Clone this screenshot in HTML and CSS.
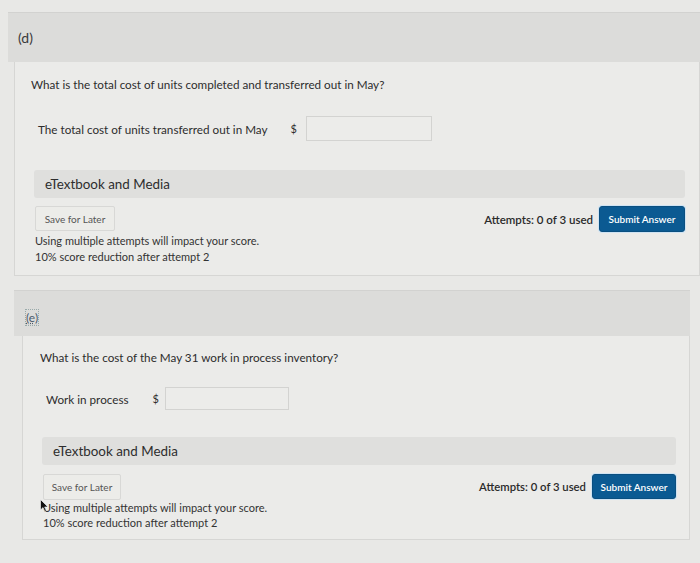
FILE: index.html
```html
<!DOCTYPE html>
<html>
<head>
<meta charset="utf-8">
<link rel="stylesheet" href="styles.css">
</head>
<body>
<div class="page">
  <section class="part part-d">
    <div class="part-head"><span class="label">(d)</span></div>
    <div class="part-body">
      <p class="question">What is the total cost of units completed and transferred out in May?</p>
      <div class="answer-row">
        <span class="answer-label">The total cost of units transferred out in May</span>
        <span class="dollar">$</span>
        <span class="input"></span>
      </div>
      <div class="media-bar">eTextbook and Media</div>
      <div class="actions">
        <div class="left">
          <button class="save">Save for Later</button>
          <div class="note">Using multiple attempts will impact your score.<br>10% score reduction after attempt 2</div>
        </div>
        <div class="right">
          <span class="attempts">Attempts: 0 of 3 used</span>
          <button class="submit">Submit Answer</button>
        </div>
      </div>
    </div>
  </section>

  <section class="part part-e">
    <div class="part-head"><span class="label label-focus">(e)</span></div>
    <div class="part-body">
      <p class="question">What is the cost of the May 31 work in process inventory?</p>
      <div class="answer-row">
        <span class="answer-label">Work in process</span>
        <span class="dollar">$</span>
        <span class="input"></span>
      </div>
      <div class="media-bar">eTextbook and Media</div>
      <div class="actions">
        <div class="left">
          <button class="save">Save for Later</button>
          <div class="note note-cursor">Using multiple attempts will impact your score.<br>10% score reduction after attempt 2<svg class="cursor" width="9" height="13" viewBox="0 0 9 13"><path d="M0.5 0.5 L0.5 11 L3 8.6 L4.8 12.5 L6.4 11.8 L4.6 8 L8 8 Z" fill="#111" stroke="#fff" stroke-width="0.6"/></svg></div>
        </div>
        <div class="right">
          <span class="attempts">Attempts: 0 of 3 used</span>
          <button class="submit">Submit Answer</button>
        </div>
      </div>
    </div>
  </section>
</div>
</body>
</html>
```

FILE: styles.css
```css
* { box-sizing: border-box; }
html, body { margin: 0; padding: 0; }
body {
  background: #e8e8e6;
  font-family: Lato, "Open Sans", Arial, sans-serif;
  color: #2d2d2d;
  width: 700px;
  height: 563px;
  overflow: hidden;
}
.page {
  padding-top: 12px;
  display: flex;
  flex-direction: column;
  gap: 14px;
}
.part {
  display: flex;
  flex-direction: column;
}
.part-d { margin-left: 8px; }
.part-e { margin-left: 14px; margin-right: 10px; }

.part-head {
  background: #dcdcda;
  height: 50px;
  display: flex;
  align-items: center;
  padding-left: 10px;
  border-top: 1px solid #d2d2d0;
}
.part-e .part-head { height: 46px; padding-left: 12px; padding-top: 8px; }
.label {
  font-size: 14px;
  color: #3a3a3a;
}
.label-focus {
  font-size: 12px;
  color: #4a5a6a;
  text-decoration: underline dotted;
  outline: 1px dotted #9aa;
  outline-offset: 0;
}
.part-body {
  background: #ebebe9;
  border: 1px solid #d6d6d4;
  border-top: none;
  margin-left: 6px;
  padding: 14px 14px 10px 16px;
}
.part-e .part-body {
  margin-left: 8px;
  padding: 13px 13px 9px 17px;
}
.question {
  margin: 0;
  font-size: 11.7px;
  line-height: 16px;
}
.answer-row {
  display: flex;
  align-items: center;
  margin-top: 24px;
  padding-left: 7px;
  font-size: 11.7px;
}
.part-e .answer-row { margin-top: 22px; padding-left: 6px; }
.answer-label { margin-right: 23px; }
.part-e .answer-label { margin-right: 24px; }
.dollar { font-size: 11px; margin-right: 9px; }
.part-e .dollar { margin-right: 6px; }
.input {
  display: block;
  width: 126px;
  height: 25px;
  border: 1px solid #d3d3d1;
  background: #ececea;
}
.part-e .input { width: 124px; height: 23px; }
.media-bar {
  margin-top: 29px;
  margin-left: 3px;
  background: #dfdfdd;
  height: 28px;
  display: flex;
  align-items: center;
  padding-left: 11px;
  font-size: 13.4px;
  border-radius: 3px;
}
.part-e .media-bar { margin-top: 27px; margin-left: 2px; }
.actions {
  display: flex;
  justify-content: space-between;
  align-items: flex-start;
  margin-top: 8px;
  margin-left: 4px;
}
.part-e .actions { margin-left: 3px; margin-top: 9px; }
.left { display: flex; flex-direction: column; align-items: flex-start; }
.save {
  font-family: inherit;
  font-size: 10px;
  color: #555;
  background: #ecece9;
  border: 1px solid #d8d8d6;
  border-radius: 2px;
  height: 25px;
  width: 80px;
  padding: 0;
}
.part-e .save { width: 78px; height: 26px; }
.note {
  margin-top: 2px;
  font-size: 11px;
  line-height: 16px;
  color: #333;
}
.part-e .note { margin-top: 0; line-height: 15px; }
.note-cursor { position: relative; }
.cursor {
  position: absolute;
  left: -3px;
  top: -1px;
}
.right {
  display: flex;
  align-items: center;
  gap: 6px;
}
.attempts {
  font-size: 11.5px;
  font-weight: 600;
  color: #2a2a2a;
}
.part-e .attempts { font-size: 11.3px; }
.submit {
  font-family: inherit;
  font-size: 10px;
  font-weight: 600;
  color: #fff;
  background: #0b5a92;
  border: 1px solid #0a4f80;
  border-radius: 3px;
  height: 26px;
  width: 86px;
  padding: 0;
  box-shadow: 0 0 0 1px #cfe3f3;
}
.part-e .submit { width: 84px; height: 25px; }
```
